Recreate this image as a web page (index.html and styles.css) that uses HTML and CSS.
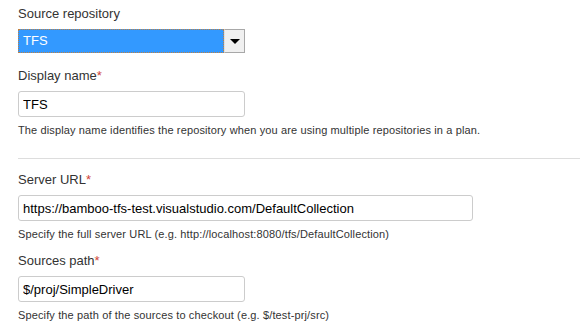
FILE: index.html
```html
<!DOCTYPE html>
<html lang="en">
<head>
    <meta charset="UTF-8">
    <title>Repository settings</title>
    <link rel="stylesheet" href="styles.css">
</head>
<body>

    <form class="repo-form" action="#" method="POST">
        <div class="field-group first">
            <label for="repo-type">Source repository</label>
            <div class="select" id="repo-type">
                <span class="select-value">TFS</span>
                <span class="select-button"><span class="arrow"></span></span>
            </div>
        </div>

        <div class="field-group after-select">
            <label for="display-name">Display name<span class="required">*</span></label>
            <input type="text" id="display-name" class="text short" value="TFS">
            <div class="description">The display name identifies the repository when you are using multiple repositories in a plan.</div>
        </div>

        <div class="separator"></div>

        <div class="field-group first">
            <label for="server-url">Server URL<span class="required">*</span></label>
            <input type="text" id="server-url" class="text long" value="https://bamboo-tfs-test.visualstudio.com/DefaultCollection">
            <div class="description">Specify the full server URL (e.g. http://localhost:8080/tfs/DefaultCollection)</div>
        </div>

        <div class="field-group">
            <label for="sources-path">Sources path<span class="required">*</span></label>
            <input type="text" id="sources-path" class="text short" value="$/proj/SimpleDriver">
            <div class="description">Specify the path of the sources to checkout (e.g. $/test-prj/src)</div>
        </div>
    </form>

</body>
</html>
```

FILE: styles.css
```css
body {
    font-family: Arial, "Liberation Sans", sans-serif;
    font-size: 13px;
    color: #333;
    margin: 0;
    padding: 0;
    background: #fff;
}
.repo-form {
    padding: 6px 0 0 18px;
}
.field-group {
    margin-top: 12px;
}
.field-group.first {
    margin-top: 0;
}
.field-group.after-select {
    margin-top: 15px;
}
.field-group label {
    display: block;
    line-height: 16px;
    margin-bottom: 7px;
}
.required {
    color: #d04437;
}
.select {
    display: flex;
    width: 227px;
    height: 24px;
    box-sizing: border-box;
}
.select-value {
    flex: 1;
    background-color: #3399ff;
    color: #fff;
    line-height: 22px;
    padding-left: 4px;
    border: 1px dotted #c08040;
}
.select-button {
    width: 19px;
    background-color: #f0f0f0;
    border: 1px solid #a8a8a8;
    border-left-color: #e0e0e0;
    display: flex;
    align-items: center;
    justify-content: center;
}
.arrow {
    width: 0;
    height: 0;
    border-left: 5px solid transparent;
    border-right: 5px solid transparent;
    border-top: 5px solid #000;
}
input.text {
    display: block;
    font-family: Arial, "Liberation Sans", sans-serif;
    font-size: 13px;
    color: #000;
    height: 26px;
    box-sizing: border-box;
    padding: 0 4px;
    border: 1px solid #ccc;
    border-radius: 3px;
    margin: 0;
}
input.short {
    width: 227px;
}
input.long {
    width: 455px;
}
.description {
    font-size: 11px;
    line-height: 13px;
    letter-spacing: 0.13px;
    color: #333;
    margin-top: 7px;
}
.separator {
    border-top: 1px solid #ddd;
    margin: 21px 0 13px 0;
}
```
